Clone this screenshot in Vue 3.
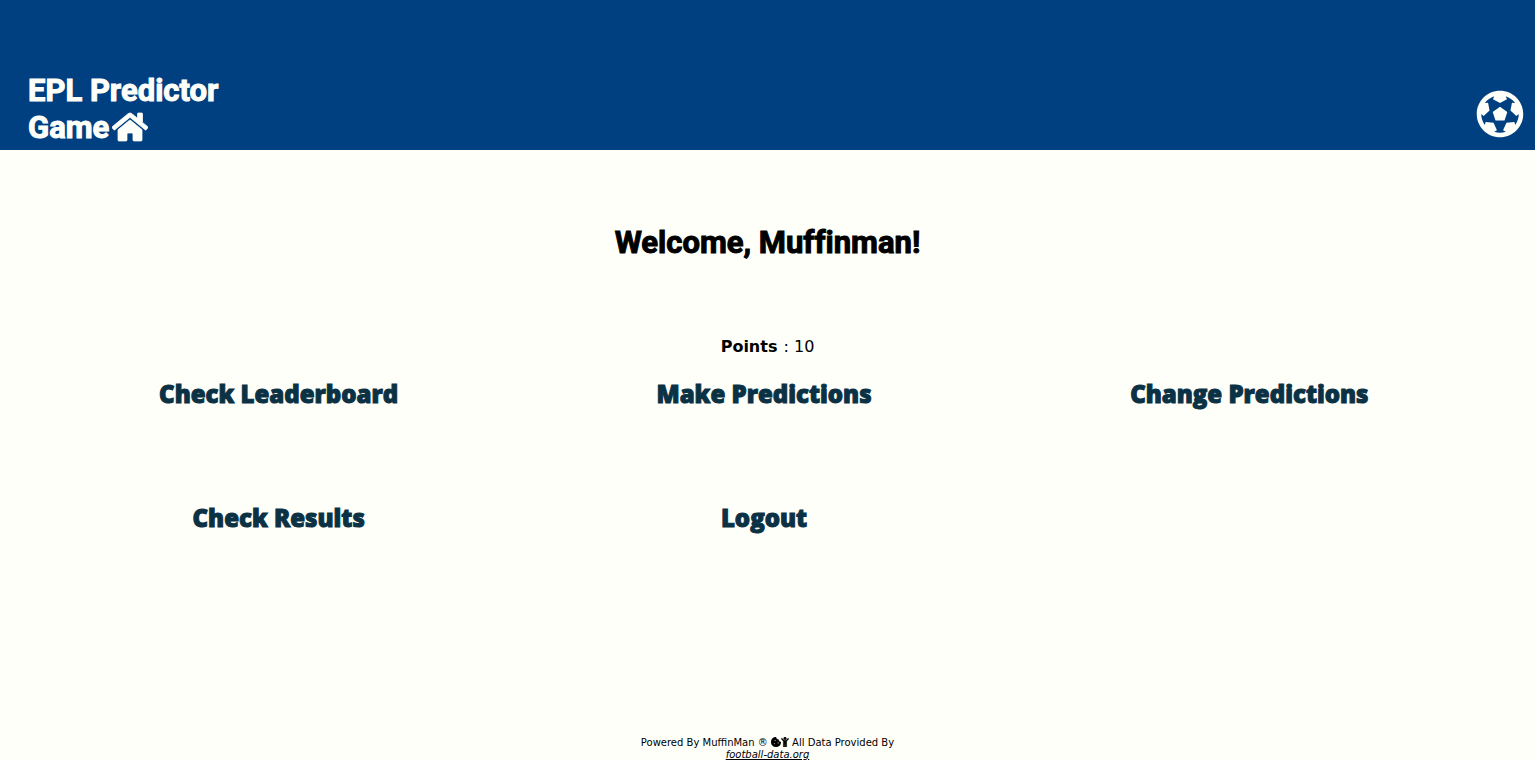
<script setup>
const actions = [
  'Check Leaderboard',
  'Make Predictions',
  'Change Predictions',
  'Check Results',
  'Logout',
]
const points = 10
</script>

<template>
  <div class="page">
    <header class="header">
      <h1 class="brand">
        <a href="#">EPL Predictor<br />Game<svg class="home" viewBox="0 0 576 512" aria-hidden="true"><path d="M280.37 148.26L96 300.11V464a16 16 0 0 0 16 16l112.06-.29a16 16 0 0 0 15.92-16V368a16 16 0 0 1 16-16h64a16 16 0 0 1 16 16v95.64a16 16 0 0 0 16 16.05L464 480a16 16 0 0 0 16-16V300L295.67 148.26a12.19 12.19 0 0 0-15.3 0zM571.6 251.47L488 182.56V44.05a12 12 0 0 0-12-12h-56a12 12 0 0 0-12 12v72.61L318.47 43a48 48 0 0 0-61 0L4.34 251.47a12 12 0 0 0-1.6 16.9l25.5 31A12 12 0 0 0 45.15 301l235.22-193.74a12.19 12.19 0 0 1 15.3 0L530.9 301a12 12 0 0 0 16.9-1.6l25.5-31a12 12 0 0 0-1.7-16.93z" /></svg></a>
      </h1>
      <svg class="ball" viewBox="0 0 512 512" aria-hidden="true"><path d="M504 256c0 136.97-111.03 248-248 248S8 392.97 8 256 119.03 8 256 8s248 111.03 248 248zm-48 0l-.003-.282-26.064 22.741-62.679-58.5 16.454-84.355 34.303 3.072c-24.889-34.216-60.004-60.089-100.709-73.141l13.651 31.939L256 139l-74.953-41.525 13.651-31.939c-40.631 13.028-75.78 38.87-100.709 73.141l34.565-3.073 16.192 84.355-62.678 58.5-26.064-22.741-.003.282c0 43.015 13.497 83.952 38.472 117.991l7.704-33.897 85.138 10.447 36.301 77.826-29.902 17.786c40.202 13.122 84.29 13.148 124.572 0l-29.902-17.786 36.301-77.826 85.138-10.447 7.704 33.897C442.503 339.952 456 299.015 456 256zm-248.102 69.571l-29.894-91.312L256 177.732l77.996 56.527-29.622 91.312h-96.476z" /></svg>
    </header>

    <main class="main">
      <h2 class="welcome">Welcome, Muffinman!</h2>
      <p class="points"><strong>Points</strong> : {{ points }}</p>
      <nav class="actions">
        <a v-for="action in actions" :key="action" href="#">{{ action }}</a>
      </nav>
    </main>

    <footer class="footer">
      <div>
        Powered By MuffinMan ®
        <svg class="cookie" viewBox="0 0 512 512" aria-hidden="true"><path d="M510.52 255.82c-69.97-.85-126.47-57.69-126.47-127.86-70.17 0-127-56.49-127.86-126.45-27.26-4.14-55.13.3-79.72 12.82l-69.13 35.22a132.221 132.221 0 0 0-57.79 57.81l-35.1 68.88a132.645 132.645 0 0 0-12.82 80.95l12.08 76.27a132.521 132.521 0 0 0 37.16 72.96l54.77 54.76a132.036 132.036 0 0 0 72.71 37.06l76.71 12.15c27.51 4.36 55.7-.11 80.53-12.76l69.13-35.21a132.273 132.273 0 0 0 57.79-57.81l35.1-68.88c12.56-24.64 17.01-52.58 12.91-79.91zM176 368c-17.67 0-32-14.33-32-32s14.33-32 32-32 32 14.33 32 32-14.33 32-32 32zm32-160c-17.67 0-32-14.33-32-32s14.33-32 32-32 32 14.33 32 32-14.33 32-32 32zm160 128c-17.67 0-32-14.33-32-32s14.33-32 32-32 32 14.33 32 32-14.33 32-32 32z" /></svg><svg class="child" viewBox="0 0 384 512" aria-hidden="true"><path d="M120 72c0-39.765 32.235-72 72-72s72 32.235 72 72c0 39.764-32.235 72-72 72s-72-32.236-72-72zm254.627 1.373c-12.496-12.497-32.758-12.497-45.254 0L242.745 160H141.254L54.627 73.373c-12.496-12.497-32.758-12.497-45.254 0-12.497 12.497-12.497 32.758 0 45.255L104 213.254V480c0 17.673 14.327 32 32 32h16c17.673 0 32-14.327 32-32V368h16v112c0 17.673 14.327 32 32 32h16c17.673 0 32-14.327 32-32V213.254l94.627-94.627c12.497-12.496 12.497-32.757 0-45.254z" /></svg>
        All Data Provided By
      </div>
      <a href="#">football-data.org</a>
    </footer>
  </div>
</template>

<style>
body {
  background: #fffffa;
}
</style>

<style scoped>
.page {
  display: flex;
  flex-direction: column;
  min-height: 100vh;
  font-family: "DejaVu Sans", sans-serif;
  font-size: 16px;
  color: #000;
}
.header {
  display: flex;
  justify-content: space-between;
  align-items: flex-end;
  box-sizing: border-box;
  height: 150px;
  padding: 0 11px 4px 28px;
  background: #004080;
  color: #fffffa;
}
.brand,
.welcome {
  margin: 0;
  font-family: Roboto, "Liberation Sans", sans-serif;
  font-size: 31px;
  line-height: 37px;
  font-weight: 700;
  font-variant-ligatures: none;
  -webkit-text-stroke: 1px currentColor;
}
.brand a {
  color: inherit;
  text-decoration: none;
}
.home {
  width: 36px;
  height: 32px;
  margin-left: 3px;
  vertical-align: -5px;
  fill: currentColor;
  stroke: currentColor;
  stroke-width: 12px;
  stroke-linejoin: round;
}
.ball {
  width: 48px;
  height: 48px;
  margin-bottom: 8px;
  fill: currentColor;
}
.main {
  flex: 1;
}
.welcome {
  margin-top: 74px;
  text-align: center;
}
.points {
  margin: 76px 0 0;
  line-height: 19px;
  text-align: center;
}
.points strong {
  margin-right: 1px;
}
.actions {
  display: grid;
  grid-template-columns: repeat(3, 1fr);
  row-gap: 92px;
  justify-items: center;
  padding: 22px 43px 0 36px;
}
.actions a {
  font-family: "Open Sans", sans-serif;
  font-size: 24px;
  line-height: 32px;
  font-weight: 800;
  color: #0b3144;
  text-decoration: none;
  -webkit-text-stroke: 1px currentColor;
}
.footer {
  margin-bottom: -1px;
  font-size: 10px;
  line-height: 12px;
  text-align: center;
}
.footer a {
  color: inherit;
  font-style: italic;
}
.cookie,
.child {
  width: 10px;
  height: 10px;
  vertical-align: -1px;
  stroke: currentColor;
  stroke-width: 16px;
}
.child {
  width: 8px;
}
</style>
